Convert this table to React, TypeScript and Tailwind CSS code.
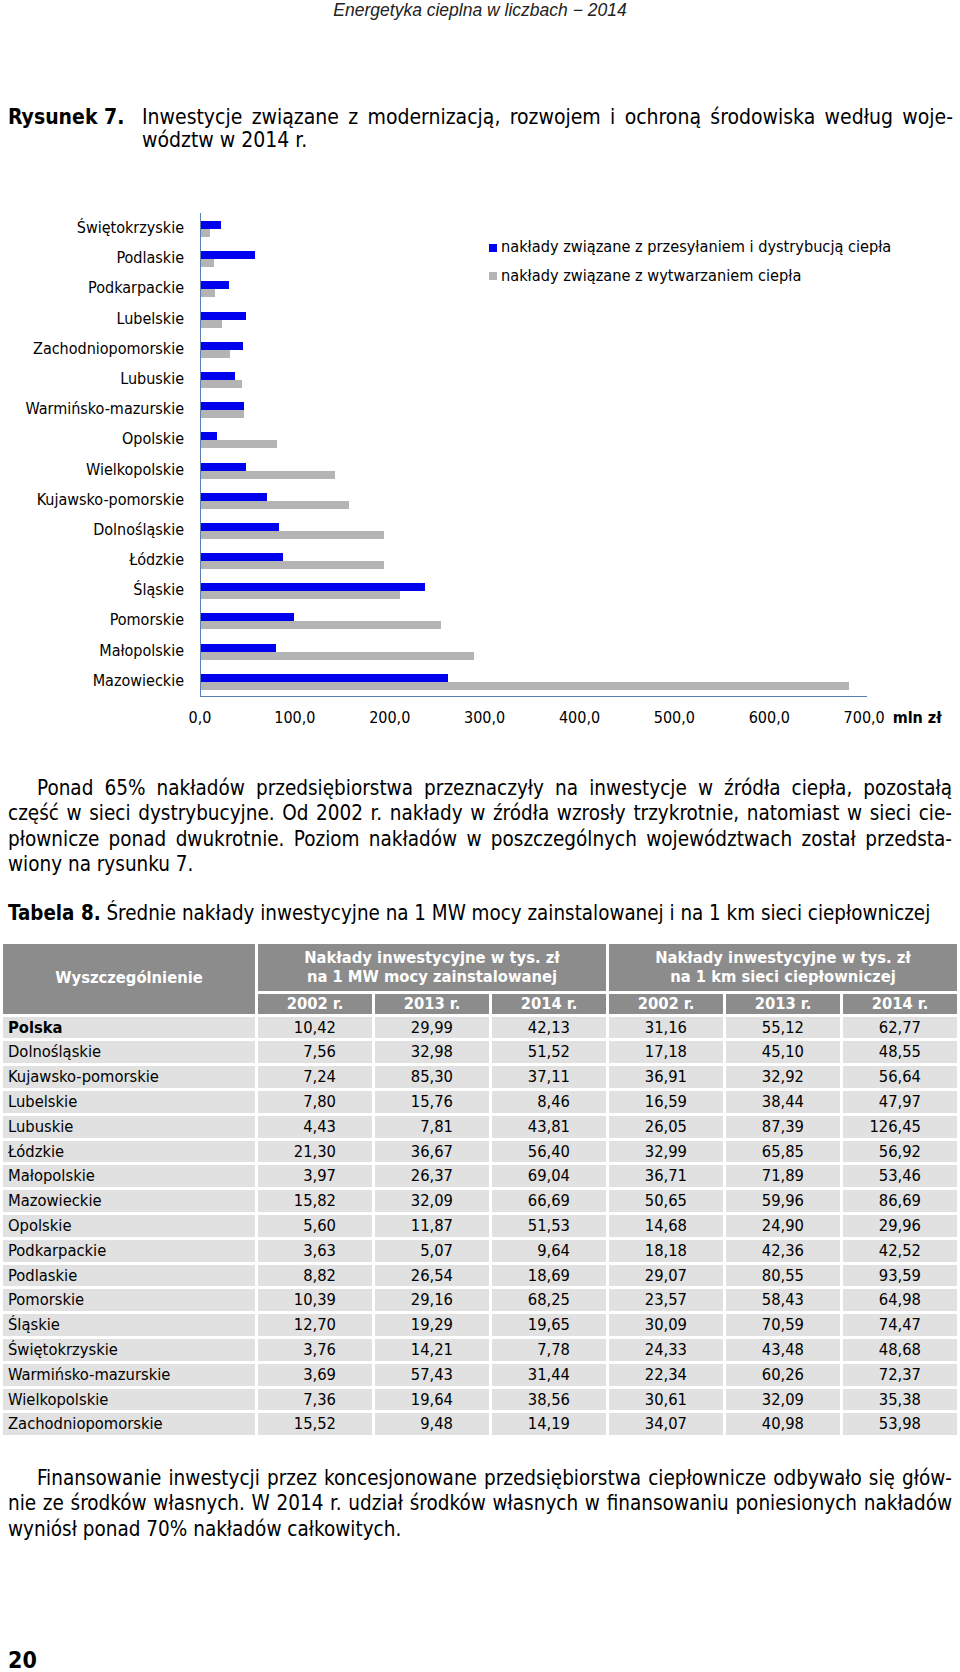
import React from "react";

const bars: { name: string; blue: number; gray: number }[] = [
  { name: "Świętokrzyskie", blue: 20, gray: 9 },
  { name: "Podlaskie", blue: 54, gray: 13 },
  { name: "Podkarpackie", blue: 28, gray: 14 },
  { name: "Lubelskie", blue: 45, gray: 21 },
  { name: "Zachodniopomorskie", blue: 42, gray: 29 },
  { name: "Lubuskie", blue: 34, gray: 41 },
  { name: "Warmińsko-mazurskie", blue: 43, gray: 43 },
  { name: "Opolskie", blue: 16, gray: 76 },
  { name: "Wielkopolskie", blue: 45, gray: 134 },
  { name: "Kujawsko-pomorskie", blue: 66, gray: 148 },
  { name: "Dolnośląskie", blue: 78, gray: 183 },
  { name: "Łódzkie", blue: 82, gray: 183 },
  { name: "Śląskie", blue: 224, gray: 199 },
  { name: "Pomorskie", blue: 93, gray: 240 },
  { name: "Małopolskie", blue: 75, gray: 273 },
  { name: "Mazowieckie", blue: 247, gray: 648 },
];

const ticks = ["0,0", "100,0", "200,0", "300,0", "400,0", "500,0", "600,0", "700,0"];

const rows: [string, string, string, string, string, string, string][] = [
  ["Polska", "10,42", "29,99", "42,13", "31,16", "55,12", "62,77"],
  ["Dolnośląskie", "7,56", "32,98", "51,52", "17,18", "45,10", "48,55"],
  ["Kujawsko-pomorskie", "7,24", "85,30", "37,11", "36,91", "32,92", "56,64"],
  ["Lubelskie", "7,80", "15,76", "8,46", "16,59", "38,44", "47,97"],
  ["Lubuskie", "4,43", "7,81", "43,81", "26,05", "87,39", "126,45"],
  ["Łódzkie", "21,30", "36,67", "56,40", "32,99", "65,85", "56,92"],
  ["Małopolskie", "3,97", "26,37", "69,04", "36,71", "71,89", "53,46"],
  ["Mazowieckie", "15,82", "32,09", "66,69", "50,65", "59,96", "86,69"],
  ["Opolskie", "5,60", "11,87", "51,53", "14,68", "24,90", "29,96"],
  ["Podkarpackie", "3,63", "5,07", "9,64", "18,18", "42,36", "42,52"],
  ["Podlaskie", "8,82", "26,54", "18,69", "29,07", "80,55", "93,59"],
  ["Pomorskie", "10,39", "29,16", "68,25", "23,57", "58,43", "64,98"],
  ["Śląskie", "12,70", "19,29", "19,65", "30,09", "70,59", "74,47"],
  ["Świętokrzyskie", "3,76", "14,21", "7,78", "24,33", "43,48", "48,68"],
  ["Warmińsko-mazurskie", "3,69", "57,43", "31,44", "22,34", "60,26", "72,37"],
  ["Wielkopolskie", "7,36", "19,64", "38,56", "30,61", "32,09", "35,38"],
  ["Zachodniopomorskie", "15,52", "9,48", "14,19", "34,07", "40,98", "53,98"],
];

const years = ["2002 r.", "2013 r.", "2014 r.", "2002 r.", "2013 r.", "2014 r."];

function JLine({ children }: { children: React.ReactNode }) {
  return <div className="text-justify [text-align-last:justify]">{children}</div>;
}

export default function App() {
  return (
    <div className="w-[960px] h-[1672px] overflow-hidden bg-white text-black font-['DejaVu_Sans_Condensed','DejaVu_Sans',sans-serif] flex flex-col px-[8px]">
      {/* running header */}
      <div className="h-[20px] leading-[20px] text-center text-[17.5px] italic text-[#222] font-['Liberation_Sans',sans-serif]">
        Energetyka cieplna w liczbach − 2014
      </div>

      {/* caption */}
      <div className="mt-[85.5px] flex text-[21px] leading-[23px]">
        <div className="w-[134px] shrink-0 font-bold">Rysunek 7.</div>
        <div className="flex-1 mr-[-1px]">
          <JLine>Inwestycje związane z modernizacją, rozwojem i ochroną środowiska według woje-</JLine>
          <div>wództw w 2014 r.</div>
        </div>
      </div>

      {/* chart */}
      <div className="mt-[61.5px] relative flex text-[16px]">
        <div className="w-[192px] shrink-0 flex flex-col pr-[16px]">
          {bars.map((b) => (
            <div key={b.name} className="h-[30.2px] leading-[30.2px] text-right whitespace-nowrap">
              {b.name}
            </div>
          ))}
        </div>
        <div className="w-[667px] border-l border-b border-[#5b7fb5] flex flex-col">
          {bars.map((b) => (
            <div key={b.name} className="h-[30.2px] pt-[8px] flex flex-col">
              <div className="h-[8px] bg-[#0000ee]" style={{ width: b.blue }} />
              <div className="h-[8px] bg-[#b4b4b4]" style={{ width: b.gray }} />
            </div>
          ))}
        </div>
        {/* legend */}
        <div className="absolute left-[481px] top-[23px] flex flex-col text-[16.2px]">
          <div className="flex items-center h-[23px]">
            <span className="w-[8px] h-[8px] bg-[#0000ee] mr-[4px]" />
            <span>nakłady związane z przesyłaniem i dystrybucją ciepła</span>
          </div>
          <div className="flex items-center h-[23px] mt-[5.5px]">
            <span className="w-[8px] h-[8px] bg-[#b4b4b4] mr-[4px]" />
            <span>nakłady związane z wytwarzaniem ciepła</span>
          </div>
        </div>
      </div>

      {/* axis labels */}
      <div className="mt-[11px] flex items-center h-[20px] leading-[20px] text-[16px] ml-[144.5px]">
        {ticks.map((t) => (
          <div key={t} className="w-[94.9px] text-center shrink-0">
            {t}
          </div>
        ))}
        <div className="ml-[-19px] font-bold">mln zł</div>
      </div>

      {/* paragraph 1 */}
      <div className="mt-[48px] text-[20.5px] leading-[25.3px]">
        <JLine>
          <span className="pl-[29px]">Ponad 65% nakładów przedsiębiorstwa przeznaczyły na inwestycje w źródła ciepła, pozostałą</span>
        </JLine>
        <JLine>część w sieci dystrybucyjne. Od 2002 r. nakłady w źródła wzrosły trzykrotnie, natomiast w sieci cie-</JLine>
        <JLine>płownicze ponad dwukrotnie. Poziom nakładów w poszczególnych województwach został przedsta-</JLine>
        <div>wiony na rysunku 7.</div>
      </div>

      {/* table title */}
      <div className="mt-[24px] text-[20.4px] leading-[25px] whitespace-nowrap">
        <span className="font-bold">Tabela 8.</span> Średnie nakłady inwestycyjne na 1 MW mocy zainstalowanej i na 1 km sieci ciepłowniczej
      </div>

      {/* table */}
      <div className="mt-[17.5px] mx-[-5px] grid grid-cols-[252px_repeat(6,1fr)] gap-[3px] text-[16.4px]">
        <div className="row-span-2 bg-[#8c8c8c] text-white font-bold flex items-center justify-center">
          Wyszczególnienie
        </div>
        <div className="col-span-3 h-[47px] bg-[#8c8c8c] text-white font-bold flex flex-col items-center justify-center leading-[19px]">
          <div>Nakłady inwestycyjne w tys. zł</div>
          <div>na 1 MW mocy zainstalowanej</div>
        </div>
        <div className="col-span-3 h-[47px] bg-[#8c8c8c] text-white font-bold flex flex-col items-center justify-center leading-[19px]">
          <div>Nakłady inwestycyjne w tys. zł</div>
          <div>na 1 km sieci ciepłowniczej</div>
        </div>
        {years.map((y, i) => (
          <div key={i} className="h-[20px] leading-[20px] bg-[#8c8c8c] text-white font-bold text-center">
            {y}
          </div>
        ))}
        {rows.map((r, ri) => (
          <React.Fragment key={r[0]}>
            <div className={`h-[21.8px] leading-[21.8px] bg-[#e1e1e1] pl-[5px] whitespace-nowrap ${ri === 0 ? "font-bold" : ""}`}>
              {r[0]}
            </div>
            {r.slice(1).map((v, vi) => (
              <div key={vi} className="h-[21.8px] leading-[21.8px] bg-[#e1e1e1] text-right pr-[36px]">
                {v}
              </div>
            ))}
          </React.Fragment>
        ))}
      </div>

      {/* paragraph 2 */}
      <div className="mt-[30.75px] text-[20.5px] leading-[25.4px]">
        <JLine>
          <span className="pl-[29px]">Finansowanie inwestycji przez koncesjonowane przedsiębiorstwa ciepłownicze odbywało się głów-</span>
        </JLine>
        <JLine>nie ze środków własnych. W 2014 r. udział środków własnych w finansowaniu poniesionych nakładów</JLine>
        <div>wyniósł ponad 70% nakładów całkowitych.</div>
      </div>

      {/* page number */}
      <div className="mt-auto mb-[1px] h-[22px] leading-[22px] text-[23px] font-bold">20</div>
    </div>
  );
}
